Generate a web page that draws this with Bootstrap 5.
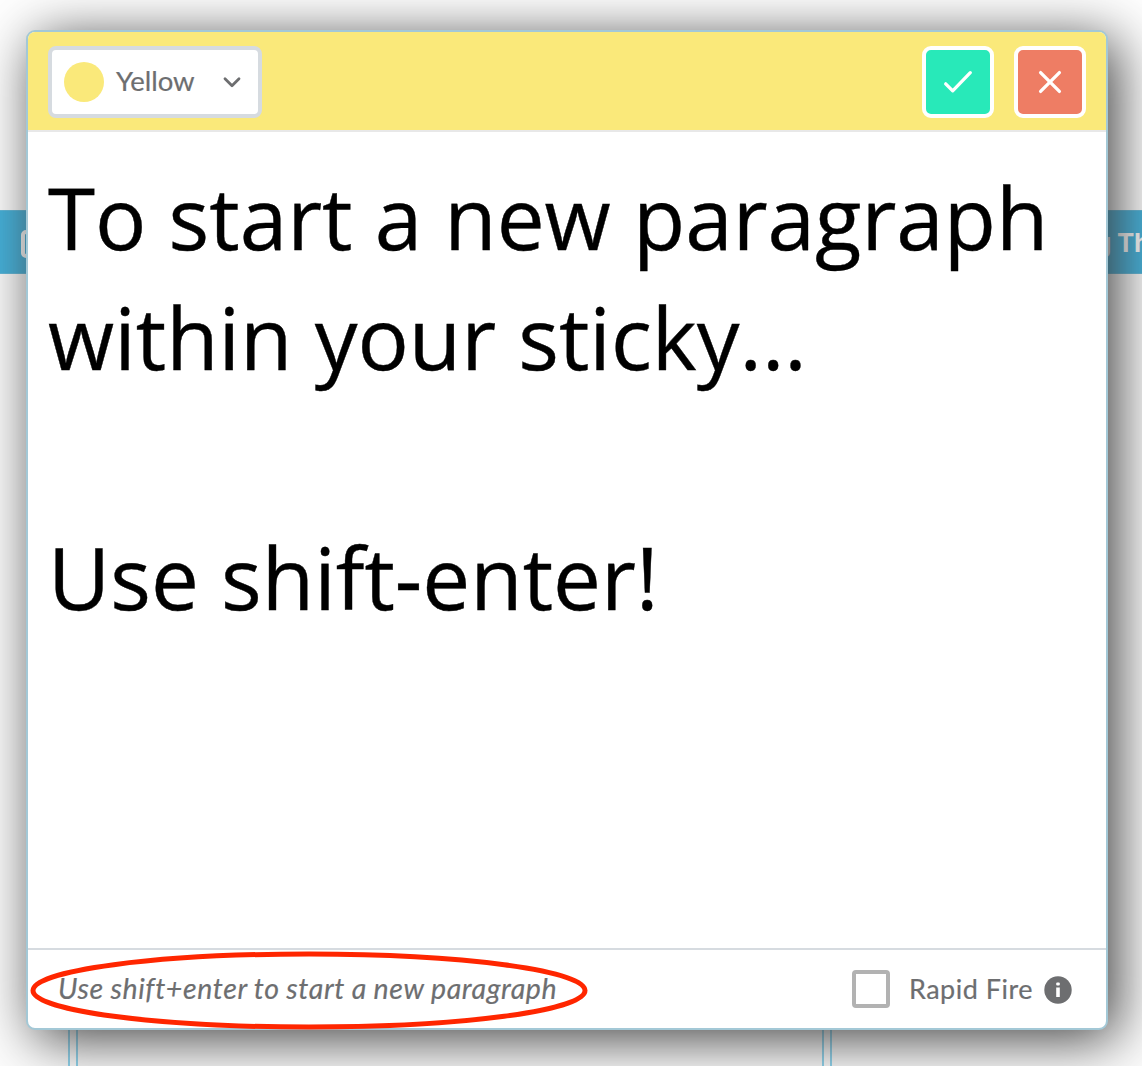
<!DOCTYPE html>
<html lang="en">
<head>
<meta charset="utf-8">
<title>Sticky editor</title>
<link href="https://cdn.jsdelivr.net/npm/bootstrap@5.3.0/dist/css/bootstrap.min.css" rel="stylesheet">
<style>
  html, body { height: 1066px; }
  body { font-family: Lato, "Open Sans", sans-serif; color: #6d6e70; background: #fff; }
  .stage { width: 1142px; height: 1066px; }
  .board { inset: 0; gap: 6px; padding-top: 210px; }
  .lane { border-right: 2px solid #8fd6f0; border-left: 2px solid #8fd6f0; background: #fdfdfd; }
  .lane-first { width: 70px; border-left: 0; }
  .lane-mid { width: 748px; }
  .lane-last { width: 312px; border-right: 0; }
  .lane-head { height: 64px; background: #43b2dc; border: 1px solid #5fb9db; border-width: 1px 0; color: #fff; font-size: 26px; font-weight: 700; margin: 0 -6px; font-family: Inter, sans-serif; letter-spacing: -.3px; }
  .lane-icon { margin-left: 27px; margin-top: 3px; }
  .lane-title { margin-left: 269px; }
  .editor { width: 1082px; height: 1000px; margin: 30px 0 0 26px; border: 2px solid #a3c8d6; border-radius: 9px; box-shadow: 9px 9px 56px #3e3e3e; }
  .editor-top { height: 100px; background: #fae97a; border-bottom: 2px solid #e8e8e8; border-radius: 7px 7px 0 0; padding: 14px 20px 0; }
  .color-pick { width: 214px; height: 72px; border: 4px solid #d6dbe0; border-radius: 8px; padding: 0 16px 0 12px; font-size: 27.5px; line-height: 1; }
  .pick-name { padding-bottom: 3px; -webkit-text-stroke: .2px #6d6e70; }
  .swatch { width: 40px; height: 40px; background: #fae97a; margin-right: 12px; }
  .act { width: 72px; height: 72px; border: 4px solid #fff; border-radius: 9px; }
  .act-ok { background: #28e9b9; }
  .act-no { background: #ee7d64; margin-left: 20px; }
  .note-text { font-family: "Open Sans", sans-serif; font-size: 85.400px; line-height: 120px; color: #000; padding: 25px 20px 0 20px; -webkit-text-stroke: .4px #000; }
  .editor-foot { height: 80px; border-top: 2px solid #d6dbe0; font-size: 27px; line-height: 1; padding: 0 34px 0 30px; }
  .hint { font-size: 28.500px; letter-spacing: .620px; word-spacing: -.600px; padding-bottom: 2px; -webkit-text-stroke: .2px #6d6e70; }
  .rapid-label { letter-spacing: .5px; padding-bottom: 2px; -webkit-text-stroke: .2px #6d6e70; }
  .rapid-box { width: 38px; height: 38px; border: 4px solid #b2b2b2; border-radius: 4px; margin-right: 19px; }
  .info { margin-left: 11px; margin-top: 2px; }
  .ring { left: 30px; top: 950px; }
</style>
</head>
<body>
<main class="stage position-relative overflow-hidden">
  <div class="board position-absolute d-flex">
    <section class="lane lane-first flex-shrink-0">
      <div class="lane-head d-flex align-items-center">
        <svg class="lane-icon flex-shrink-0" width="28" height="30" viewBox="0 0 28 30" fill="none" stroke="#fff" stroke-width="4"><rect x="2" y="3" width="24" height="24" rx="3"/></svg>
      </div>
    </section>
    <section class="lane lane-mid flex-shrink-0"><div class="lane-head"></div></section>
    <section class="lane lane-last flex-shrink-0">
      <div class="lane-head d-flex align-items-center"><span class="lane-title text-nowrap">g Th</span></div>
    </section>
  </div>

  <div class="d-flex">
    <div class="editor bg-white position-relative d-flex flex-column flex-shrink-0">
      <header class="editor-top d-flex align-items-start">
        <div class="color-pick bg-white d-flex align-items-center me-auto">
          <span class="swatch rounded-circle"></span>
          <span class="pick-name">Yellow</span>
          <svg class="ms-auto" width="20" height="14" viewBox="0 0 20 14" fill="none" stroke="#6d6e70" stroke-width="2.8" stroke-linecap="round" stroke-linejoin="round"><path d="M3 3.800l7 7 7-7"/></svg>
        </div>
        <button class="act act-ok p-0 d-flex align-items-center justify-content-center" type="button" aria-label="Save">
          <svg width="32" height="28" viewBox="0 0 32 28" fill="none" stroke="#fff" stroke-width="3.300" stroke-linecap="round" stroke-linejoin="round"><path d="M3.700 15.800l7 7L28.300 4.700"/></svg>
        </button>
        <button class="act act-no p-0 d-flex align-items-center justify-content-center" type="button" aria-label="Cancel">
          <svg width="28" height="28" viewBox="0 0 28 28" fill="none" stroke="#fff" stroke-width="3.300" stroke-linecap="round"><path d="M4.600 4.600l18.800 18.800M23.400 4.600l-18.800 18.800"/></svg>
        </button>
      </header>
      <div class="note-text flex-grow-1">To start a new paragraph<br>within your sticky...<br><br>Use shift-enter!</div>
      <footer class="editor-foot d-flex align-items-center">
        <span class="hint fst-italic me-auto">Use shift+enter to start a new paragraph</span>
        <span class="rapid-box"></span>
        <span class="rapid-label">Rapid Fire</span>
        <svg class="info" width="28" height="28" viewBox="0 0 28 28"><circle cx="14" cy="14" r="13.700" fill="#6d6e70"/><rect x="12.200" y="6.500" width="3.600" height="3" rx="1" fill="#fff"/><path d="M12.200 11.500h3.600v9.500h-3.600z" fill="#fff"/></svg>
      </footer>
    </div>
  </div>
  <svg class="ring position-absolute" width="560" height="80" viewBox="0 0 560 80" fill="none" stroke="#ff2600" stroke-width="5"><ellipse cx="279" cy="40.500" rx="276" ry="36.500"/></svg>
</main>
<script src="https://cdn.jsdelivr.net/npm/bootstrap@5.3.0/dist/js/bootstrap.bundle.min.js"></script>
</body>
</html>
